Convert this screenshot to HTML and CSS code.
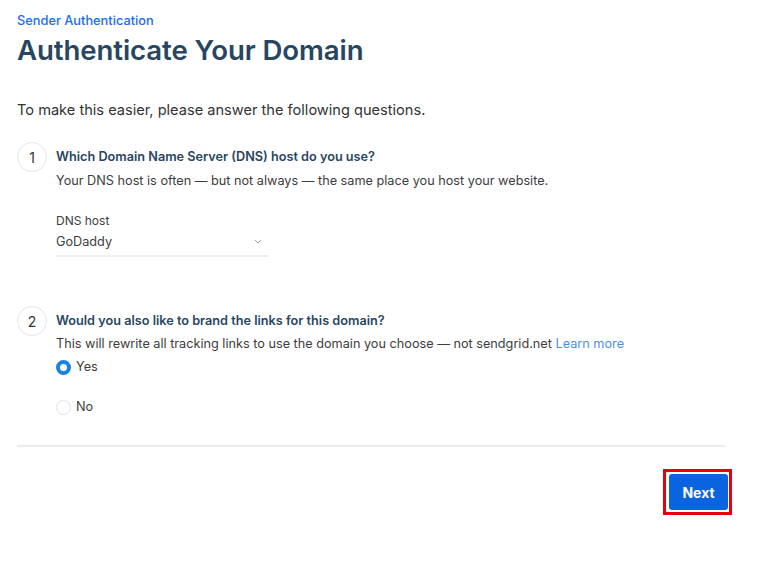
FILE: index.html
```html
<!DOCTYPE html>
<html>
<head>
<meta charset="utf-8">
<link rel="stylesheet" href="styles.css">
</head>
<body>
<div class="page">
  <div class="eyebrow">Sender Authentication</div>
  <h1 class="title">Authenticate Your Domain</h1>
  <p class="intro">To make this easier, please answer the following questions.</p>

  <div class="step">
    <div class="num">1</div>
    <div class="step-body">
      <div class="q">Which Domain Name Server (DNS) host do you use?</div>
      <div class="sub">Your DNS host is often — but not always — the same place you host your website.</div>
      <div class="field">
        <div class="label">DNS host</div>
        <div class="select">
          <span>GoDaddy</span>
          <svg class="chev" width="8" height="5" viewBox="0 0 8 5"><path d="M1 1l3 3 3-3" fill="none" stroke="#9aa6b2" stroke-width="1"/></svg>
        </div>
      </div>
    </div>
  </div>

  <div class="step step2">
    <div class="num">2</div>
    <div class="step-body">
      <div class="q">Would you also like to brand the links for this domain?</div>
      <div class="sub sub2">This will rewrite all tracking links to use the domain you choose — not sendgrid.net <a class="link">Learn more</a></div>
      <div class="radios">
        <div class="radio"><span class="dot on"></span>Yes</div>
        <div class="radio"><span class="dot"></span>No</div>
      </div>
    </div>
  </div>

  <div class="divider"></div>
  <div class="actions">
    <div class="highlight"><button class="next">Next</button></div>
  </div>
</div>
</body>
</html>
```
FILE: styles.css
```css
* { box-sizing: border-box; }
body { margin: 0; background: #fff; font-family: Inter, "Noto Sans", sans-serif; color: #3d3d3d; }
.page { padding: 13px 40px 0 17px; }
.eyebrow { font-size: 12.8px; font-weight: 500; color: #1a6ee8; line-height: 16px; }
.title { margin: 4px 0 0; font-size: 27.6px; font-weight: 600; color: #294661; line-height: 34px; letter-spacing: -0.1px; }
.intro { margin: 33px 0 0; font-size: 14.6px; line-height: 20px; color: #333; }
.step { display: flex; margin-top: 22px; }
.step2 { margin-top: 49px; }
.num { width: 30px; height: 30px; border: 1px solid #e3e6ea; border-radius: 50%; display: flex; align-items: center; justify-content: center; font-size: 14px; color: #333; flex: none; }
.step-body { margin-left: 9px; }
.q { font-size: 12.7px; font-weight: 600; color: #294661; line-height: 18px; margin-top: 6px; }
.sub { font-size: 12.7px; color: #3d3d3d; line-height: 18px; margin-top: 6px; }
.sub2 { margin-top: 5px; }
.link { color: #4d8fe0; }
.field { margin-top: 23px; width: 213px; }
.label { font-size: 12px; color: #3d3d3d; line-height: 16px; }
.select { display: flex; justify-content: space-between; align-items: center; height: 28px; border-bottom: 2px solid #eceff2; font-size: 12.7px; color: #3d3d3d; padding-bottom: 2px; }
.chev { margin-right: 7px; }
.radios { display: flex; flex-direction: column; gap: 22px; margin-top: 5px; }
.radio { display: flex; align-items: center; font-size: 12.7px; color: #3d3d3d; line-height: 18px; }
.dot { width: 15px; height: 15px; border-radius: 50%; border: 1px solid #dfe3e8; margin-right: 5px; margin-left: 0; }
.dot.on { border: 4.5px solid #1a82e2; background: #fff; }
.divider { height: 2px; background: #ececec; margin-top: 29px; }
.actions { display: flex; justify-content: flex-end; margin-top: 22px; margin-right: -7px; }
.highlight { border: 3px solid #e8000b; padding: 2px 1px 2px 3px; }
.next { display: block; width: 59px; height: 36px; border: 0; border-radius: 3px; background: #0a64e0; color: #fff; font-family: Inter, sans-serif; font-weight: 700; font-size: 14px; }
```
